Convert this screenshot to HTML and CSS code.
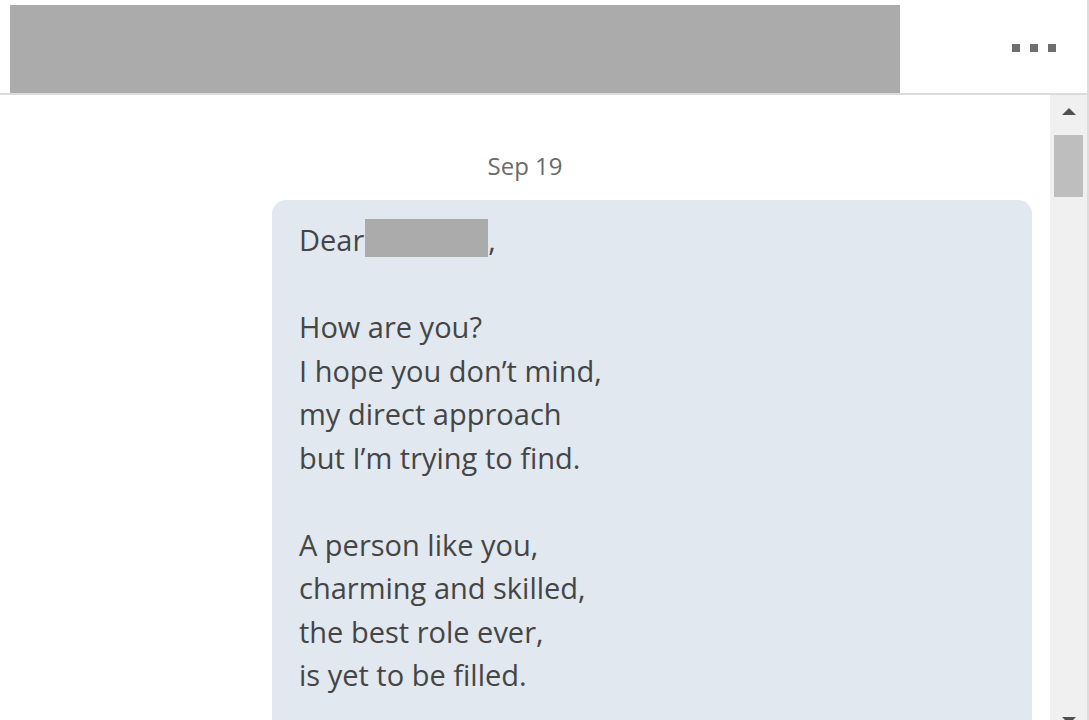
FILE: index.html
```html
<!DOCTYPE html>
<html lang="en">
<head>
  <meta charset="UTF-8">
  <meta name="viewport" content="width=device-width, initial-scale=1.0">
  <title>conversation</title>
  <link rel="stylesheet" href="styles.css">
</head>
<body>
  <div class="frame">
    <div class="topbar">
      <div class="name-block"></div>
      <div class="more-button">
        <span class="dot"></span><span class="dot"></span><span class="dot"></span>
      </div>
    </div>

    <div class="thread">
      <div class="messages">
        <p class="date">Sep 19</p>
        <div class="bubble">
          <p class="para">Dear<span class="hidden-name"></span>,</p>
          <p class="para">How are you?<br>I hope you don’t mind,<br>my direct approach<br>but I’m trying to find.</p>
          <p class="para">A person like you,<br>charming and skilled,<br>the best role ever,<br>is yet to be filled.</p>
        </div>
      </div>
      <div class="scrollbar">
        <span class="arrow-up"></span>
        <span class="thumb"></span>
        <span class="track"></span>
        <span class="arrow-down"></span>
      </div>
    </div>
  </div>
</body>
</html>
```

FILE: styles.css
```css
body {
  margin: 0;
  background: white;
  font-family: "Open Sans", "Noto Sans", Arial, sans-serif;
  overflow: hidden;
}
.frame {
  width: 1087px;
  height: 720px;
  border-right: 2px solid #dcdcdc;
  display: flex;
  flex-direction: column;
}
.topbar {
  height: 88px;
  padding-top: 5px;
  border-bottom: 2px solid #dcdcdc;
  display: flex;
  align-items: stretch;
}
.name-block {
  width: 890px;
  margin-left: 10px;
  background: #ababab;
}
.more-button {
  flex: 1;
  display: flex;
  justify-content: flex-end;
  align-items: center;
  gap: 10px;
  padding-right: 31px;
  padding-bottom: 2px;
}
.dot {
  width: 8px;
  height: 8px;
  background: #6f6f6f;
}
.thread {
  flex: 1;
  display: flex;
  min-height: 0;
}
.messages {
  flex: 1;
  padding: 0 18px 0 272px;
  overflow: hidden;
}
.date {
  margin: 55px -18px 18px -272px;
  text-align: center;
  font-size: 24px;
  color: #6b6b6b;
  line-height: 32px;
}
.bubble {
  background: #e1e8ef;
  border-radius: 14px;
  padding: 18px 27px 40px;
  color: #454545;
  font-size: 29px;
  line-height: 1.5;
}
.para {
  margin: 0 0 1.5em;
}
.hidden-name {
  display: inline-block;
  width: 123px;
  height: 38px;
  margin-left: 1px;
  background: #ababab;
  vertical-align: -6px;
}
.scrollbar {
  width: 37px;
  background: #f0f0f0;
  display: flex;
  flex-direction: column;
  align-items: center;
}
.arrow-up {
  margin-top: 13px;
  border-left: 7px solid transparent;
  border-right: 7px solid transparent;
  border-bottom: 7px solid #505050;
}
.thumb {
  margin-top: 20px;
  width: 29px;
  height: 62px;
  background: #bebebe;
}
.track {
  flex: 1;
}
.arrow-down {
  margin-bottom: -4px;
  border-left: 7px solid transparent;
  border-right: 7px solid transparent;
  border-top: 7px solid #505050;
}
```
